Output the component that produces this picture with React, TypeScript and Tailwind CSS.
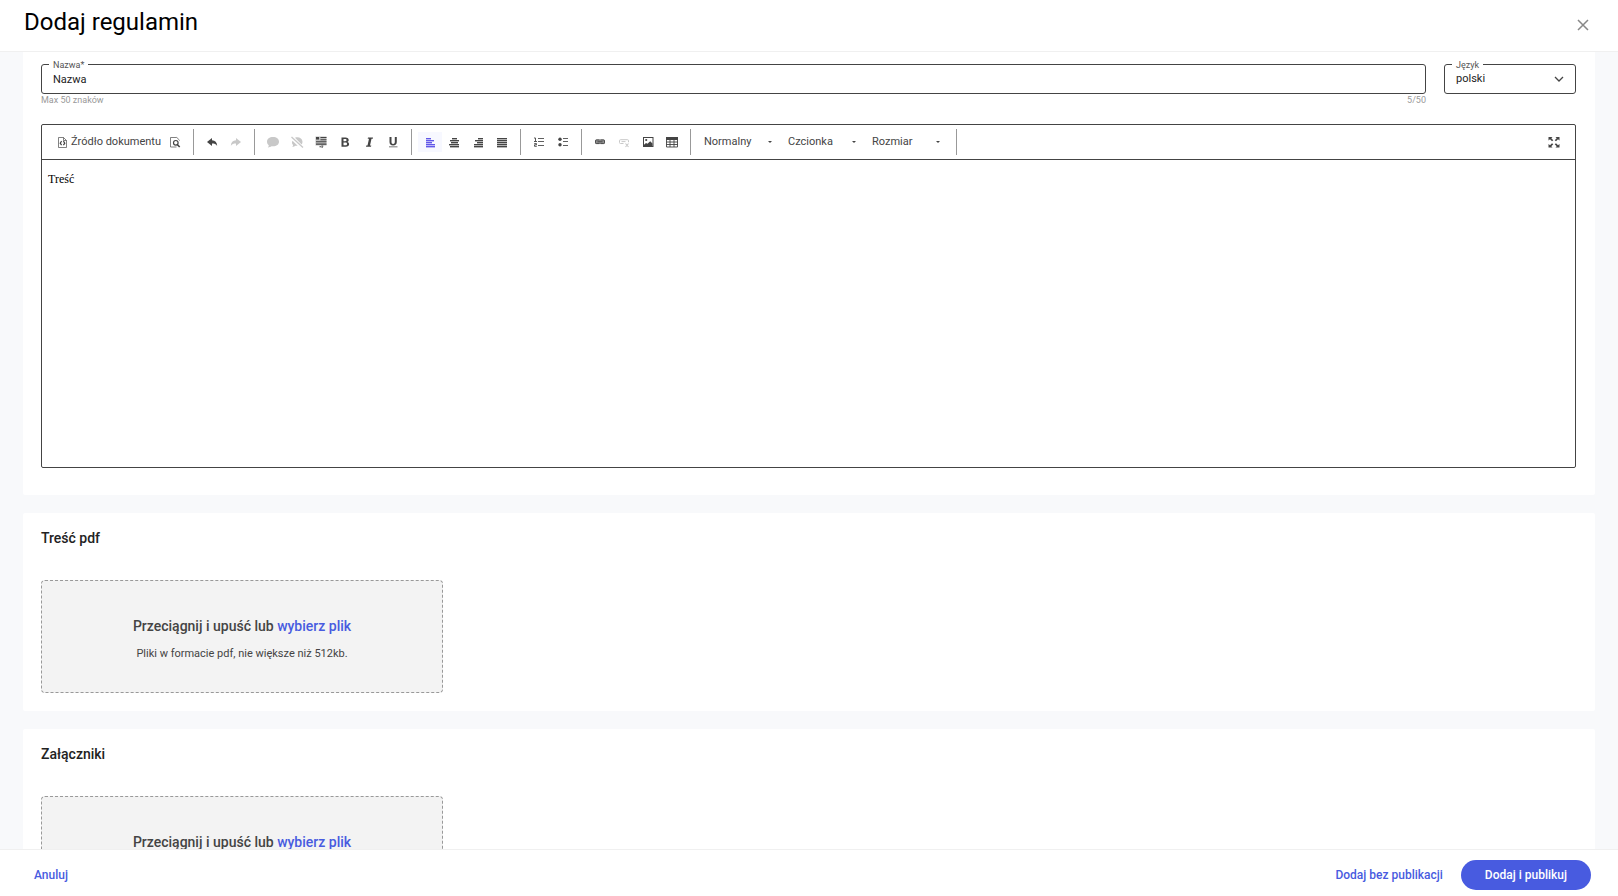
import { useState, type ReactNode } from "react";

function Icon({ children, size = 16 }: { children: ReactNode; size?: number }) {
  return (
    <svg
      width={size}
      height={size}
      viewBox="0 0 16 16"
      fill="currentColor"
      aria-hidden="true"
      className="shrink-0"
    >
      {children}
    </svg>
  );
}

/** Horizontal text lines, each given as [x, width]. */
function Lines({ rows }: { rows: [number, number][] }) {
  return (
    <Icon>
      {rows.map(([x, w], i) => (
        <rect key={i} x={x} y={4 + i * 2} width={w} height="1.4" />
      ))}
    </Icon>
  );
}

const icons = {
  source: (
    <Icon>
      <path
        d="M4.500 3.500h5l3 3v7h-8z M9.500 3.500v3h3"
        fill="none"
        stroke="currentColor"
        strokeWidth="0.9"
        opacity="0.75"
      />
      <path
        d="M7.600 7.200L6.200 9.200l1.400 2M9.400 7.200l1.400 2-1.400 2"
        fill="none"
        stroke="currentColor"
        strokeWidth="1.2"
      />
    </Icon>
  ),
  preview: (
    <Icon>
      <path
        d="M12.500 6.500v-.3l-2.700-2.700H3.500v9.500h6"
        fill="none"
        stroke="currentColor"
        strokeWidth="0.9"
        opacity="0.75"
      />
      <circle cx="8.800" cy="8.800" r="2.300" fill="none" stroke="currentColor" strokeWidth="1.200" />
      <path d="M10.200 10.500l2.500 2.500" stroke="currentColor" strokeWidth="1.600" />
    </Icon>
  ),
  undo: (
    <Icon>
      <path d="M3 8l5-4v2.300c3.200.2 5 2.100 5.200 5.700C12 10.200 10.500 9.600 8 9.600V12z" />
    </Icon>
  ),
  redo: (
    <Icon>
      <path d="M13 8L8 4v2.300C4.800 6.500 3 8.400 2.800 12 4 10.200 5.500 9.600 8 9.600V12z" />
    </Icon>
  ),
  comment: (
    <Icon>
      <path d="M8 3c3.600 0 6 2 6 4.700S11.600 12.300 8 12.300c-.5 0-1 0-1.500-.1-.9.700-2 1.100-3.700 1.300.6-.6.9-1.300 1-2.200C2.600 10.400 2 9.200 2 7.700 2 5 4.400 3 8 3z" />
    </Icon>
  ),
  commentOff: (
    <Icon>
      <path d="M6 3.700c3.500-1.200 7.300.3 7.500 4 0 1-.3 1.900-.9 2.700zM3.500 6.800l5.200 4.900c-.8.100-1.500.1-2.200 0-.8.700-1.800 1.100-3.200 1.300.5-.6.700-1.200.8-2C2.800 9.900 2.600 8.300 3.500 6.800z" />
      <path d="M2.500 3l11.500 10.500" stroke="currentColor" strokeWidth="1.300" />
    </Icon>
  ),
  comments: (
    <Icon>
      <path d="M2.500 2.500h11v9h-3v1.500h-2v-1.500h-6z" opacity="0.35" />
      <path d="M3 3h3v2.500H3zM7.500 3h6v1h-6zM7.500 5.200h6v1h-6zM3 7.300h10.500v1H3zM3 9.500h10.500v1.200H3zM6.500 12.200h1.500v1H6.500zM8.600 11.500h1v2.500h-1z" />
    </Icon>
  ),
  bold: (
    <Icon>
      <path
        fillRule="evenodd"
        d="M4.500 3.500h4c2.100 0 3.200.9 3.200 2.400 0 1-.5 1.700-1.400 2 1.200.3 1.800 1.100 1.800 2.200 0 1.700-1.200 2.700-3.400 2.700H4.500zM6.500 5v2.200h1.700c.9 0 1.400-.4 1.400-1.100S9.100 5 8.200 5zm0 3.600v2.600h2c1 0 1.500-.5 1.500-1.300s-.6-1.300-1.600-1.300z"
      />
    </Icon>
  ),
  italic: (
    <Icon>
      <path d="M7 3.500h5l-.2 1.300h-1.300l-1.500 6.700h1.300l-.3 1.300H5l.2-1.300h1.300l1.500-6.700H6.700z" />
    </Icon>
  ),
  underline: (
    <Icon>
      <path d="M4.500 3h2v5c0 1.300.5 2 1.600 2s1.700-.7 1.700-2V3h2v5c0 2.300-1.300 3.500-3.700 3.500S4.500 10.300 4.500 8z" />
      <rect x="4" y="12.200" width="8.500" height="1.200" opacity="0.6" />
    </Icon>
  ),
  left: <Lines rows={[[4, 5], [4, 8], [4, 6], [4, 9], [4, 9]]} />,
  center: <Lines rows={[[6, 5], [4, 9], [5, 7], [3, 10], [4, 9]]} />,
  right: <Lines rows={[[8, 5], [5, 8], [7, 6], [4, 9], [4, 9]]} />,
  justify: <Lines rows={[[3, 10], [3, 10], [3, 10], [3, 10], [3, 10]]} />,
  numbered: (
    <Icon>
      <path d="M7 4h6v1H7zM7 7h6v1H7zM7 11h6v1H7z" opacity="0.85" />
      <path
        d="M3 4h1.500v3.500M3 7.500h3M3.200 9.600h2.300v1.200H3.500v1.500h2.300"
        fill="none"
        stroke="currentColor"
        strokeWidth="0.9"
      />
    </Icon>
  ),
  bulleted: (
    <Icon>
      <path d="M8 4h5v1H8zM8 7h5v1H8zM8 11h5v1H8z" opacity="0.85" />
      <circle cx="5" cy="5.300" r="1.700" />
      <circle cx="5" cy="10.800" r="1.700" />
    </Icon>
  ),
  link: (
    <Icon>
      <rect x="3" y="5.500" width="10" height="4.500" rx="1.500" opacity="0.6" />
      <path
        d="M7.500 5.900H4.500a1 1 0 0 0-1 1v1.700a1 1 0 0 0 1 1h3M8.500 5.900h3a1 1 0 0 1 1 1v1.700a1 1 0 0 1-1 1h-3M5.500 7.750h5"
        fill="none"
        stroke="currentColor"
        strokeWidth="0.9"
      />
    </Icon>
  ),
  unlink: (
    <Icon>
      <path
        d="M7.500 9.500h-3a1 1 0 0 1-1-1V6.700a1 1 0 0 1 1-1h7a1 1 0 0 1 1 1v1.500M5.500 7.600h4"
        fill="none"
        stroke="currentColor"
        strokeWidth="1"
      />
      <path d="M9.500 9.500l3 3.500M12.500 9.500l-3 3.500" stroke="currentColor" strokeWidth="1.100" />
    </Icon>
  ),
  image: (
    <Icon>
      <path fillRule="evenodd" d="M3 3h10.500v10H3zm1 1v8h8.500V4z" />
      <path d="M4 10.800l2-1.800 1.500.8 2.700-2.600L12.500 9.500V12H4z" />
      <circle cx="6.200" cy="6" r="1.100" />
    </Icon>
  ),
  table: (
    <Icon>
      <path d="M2 3h12v3H2z" />
      <path
        d="M2.500 5v8h11V5M2 8h12M2 10.500h12M6 6v7M10 6v7"
        fill="none"
        stroke="currentColor"
        strokeWidth="0.9"
      />
    </Icon>
  ),
  maximize: (
    <Icon>
      <path d="M2.500 3h4L5.300 4.200l2 2L6 7.300l-2-2L2.500 6.500zM13.500 3h-4l1.200 1.200-2 2L10 7.300l2-2 1.500 1.200zM2.500 13.500h4l-1.200-1.200 2-2L6 9.200l-2 2-1.500-1.200zM13.500 13.500h-4l1.200-1.200-2-2L10 9.200l2 2 1.500-1.200z" />
    </Icon>
  ),
};

function ToolButton({
  label,
  icon,
  disabled = false,
  active = false,
}: {
  label: string;
  icon: ReactNode;
  disabled?: boolean;
  active?: boolean;
}) {
  return (
    <button
      type="button"
      aria-label={label}
      disabled={disabled}
      className={
        "flex h-5 w-6 items-center justify-center " +
        (active ? "bg-[#f7f8ff] text-[#6157e8]" : disabled ? "text-[#c8c8c8]" : "text-[#444]")
      }
    >
      {icon}
    </button>
  );
}

function ToolGroup({ children }: { children: ReactNode }) {
  return <div className="flex h-[26px] items-center border-r border-[#999] px-1.5">{children}</div>;
}

function ToolSelect({ label }: { label: string }) {
  return (
    <div className="flex w-[84px] items-center pr-4">
      <select
        aria-label={label}
        defaultValue={label}
        className="min-w-0 flex-1 appearance-none bg-transparent text-[11px] leading-4 text-[#444] outline-none"
      >
        <option>{label}</option>
      </select>
      <svg width="4" height="2" viewBox="0 0 4 2" aria-hidden="true" className="shrink-0">
        <path d="M0 0h4L2 2z" fill="#444" />
      </svg>
    </div>
  );
}

function Outlined({
  id,
  label,
  className,
  children,
}: {
  id: string;
  label: string;
  className: string;
  children: ReactNode;
}) {
  return (
    <div className={"relative h-[30px] rounded-[3px] border border-[#444] " + className}>
      <label
        htmlFor={id}
        className="absolute -top-1.5 left-[7px] bg-white px-1 text-[9px] leading-3 text-[#555]"
      >
        {label}
      </label>
      {children}
    </div>
  );
}

function DropZone({ id }: { id: string }) {
  return (
    <div className="flex h-[113px] w-[402px] max-w-full flex-col items-center justify-center gap-3 rounded-[4px] border border-dashed border-[#999] bg-[#f3f3f3] pt-[7px]">
      <p className="text-sm leading-4 font-medium text-[#444]">
        Przeciągnij i upuść lub{" "}
        <label htmlFor={id} className="cursor-pointer text-[#485be0]">
          wybierz plik
        </label>
        <input id={id} type="file" accept="application/pdf" className="sr-only" />
      </p>
      <p className="text-[11px] leading-4 text-[#444]">Pliki w formacie pdf, nie większe niż 512kb.</p>
    </div>
  );
}

function FileCard({ id, title }: { id: string; title: string }) {
  return (
    <section className="rounded-[2px] bg-white px-[18px] pt-4 pb-[18px]">
      <h2 className="mb-8 text-sm leading-[19px] font-medium text-[#222]">{title}</h2>
      <DropZone id={id} />
    </section>
  );
}

export default function App() {
  const [name, setName] = useState("Nazwa");

  return (
    <div className="flex h-screen flex-col overflow-hidden bg-[#f8f9fb] font-[Roboto,sans-serif]">
      <header className="flex h-[52px] shrink-0 items-center justify-between border-b border-[#f0f0f0] bg-white pr-7 pl-6">
        <h1 className="pb-2 text-2xl text-black">Dodaj regulamin</h1>
        <button type="button" aria-label="Zamknij" className="pb-0.5 text-[#888]">
          <svg width="14" height="14" viewBox="0 0 14 14" aria-hidden="true">
            <path d="M2 2l10 10M12 2L2 12" stroke="currentColor" strokeWidth="1.500" />
          </svg>
        </button>
      </header>

      <main className="flex min-h-0 flex-1 flex-col gap-[18px] overflow-y-auto px-[23px] [scrollbar-width:none] *:shrink-0">
        <section className="rounded-b-[2px] bg-white pt-3 pr-[19px] pb-[27px] pl-[18px]">
          <div className="flex gap-[18px]">
            <div className="flex-1">
              <Outlined id="name" label="Nazwa*" className="w-full">
                <input
                  id="name"
                  value={name}
                  maxLength={50}
                  onChange={(e) => setName(e.target.value)}
                  className="h-full w-full bg-transparent px-[11px] text-[11px] text-[#222] outline-none"
                />
              </Outlined>
              <div className="flex justify-between text-[9px] leading-3 text-[#999]">
                <span>Max 50 znaków</span>
                <span>{name.length}/50</span>
              </div>
            </div>
            <Outlined id="language" label="Język" className="w-[132px]">
              <div className="flex h-full items-center px-[11px]">
                <select
                  id="language"
                  className="min-w-0 flex-1 appearance-none bg-transparent text-[11px] text-[#222] outline-none"
                >
                  <option>polski</option>
                </select>
                <svg width="10" height="6" viewBox="0 0 10 6" fill="none" aria-hidden="true">
                  <path d="M1 1l4 4 4-4" stroke="#444" strokeWidth="1.300" />
                </svg>
              </div>
            </Outlined>
          </div>

          <div className="mt-[18px] rounded-[2px] border border-[#444]">
            <div className="flex h-[35px] items-center border-b border-[#444] pr-[9px] pl-1.5">
              <ToolGroup>
                <button
                  type="button"
                  className="flex h-5 items-center gap-px pr-0.5 text-[11px] leading-4 whitespace-nowrap text-[#444]"
                >
                  {icons.source}
                  Źródło dokumentu
                </button>
                <ToolButton label="Podgląd" icon={icons.preview} />
              </ToolGroup>
              <ToolGroup>
                <ToolButton label="Cofnij" icon={icons.undo} />
                <ToolButton label="Ponów" icon={icons.redo} disabled />
              </ToolGroup>
              <ToolGroup>
                <ToolButton label="Komentarz" icon={icons.comment} disabled />
                <ToolButton label="Usuń komentarz" icon={icons.commentOff} disabled />
                <ToolButton label="Komentarze" icon={icons.comments} />
                <ToolButton label="Pogrubienie" icon={icons.bold} />
                <ToolButton label="Kursywa" icon={icons.italic} />
                <ToolButton label="Podkreślenie" icon={icons.underline} />
              </ToolGroup>
              <ToolGroup>
                <ToolButton label="Do lewej" icon={icons.left} active />
                <ToolButton label="Do środka" icon={icons.center} />
                <ToolButton label="Do prawej" icon={icons.right} />
                <ToolButton label="Wyjustuj" icon={icons.justify} />
              </ToolGroup>
              <ToolGroup>
                <ToolButton label="Lista numerowana" icon={icons.numbered} />
                <ToolButton label="Lista wypunktowana" icon={icons.bulleted} />
              </ToolGroup>
              <ToolGroup>
                <ToolButton label="Wstaw odnośnik" icon={icons.link} />
                <ToolButton label="Usuń odnośnik" icon={icons.unlink} disabled />
                <ToolButton label="Obrazek" icon={icons.image} />
                <ToolButton label="Tabela" icon={icons.table} />
              </ToolGroup>
              <div className="flex h-[26px] items-center border-r border-[#999] pl-[13px]">
                <ToolSelect label="Normalny" />
                <ToolSelect label="Czcionka" />
                <ToolSelect label="Rozmiar" />
              </div>
              <div className="ml-auto">
                <ToolButton label="Maksymalizuj" icon={icons.maximize} />
              </div>
            </div>
            <textarea
              aria-label="Treść"
              defaultValue="Treść"
              className="block h-[307px] w-full resize-none px-1.5 py-[11px] font-['Liberation_Serif',serif] text-xs text-black outline-none"
            />
          </div>
        </section>

        <FileCard id="pdf-file" title="Treść pdf" />
        <FileCard id="attachment-file" title="Załączniki" />
      </main>

      <footer className="flex h-[47px] shrink-0 items-center justify-between border-t border-[#f0f0f0] bg-white pt-1 pr-[27px] pl-[34px] text-xs font-medium">
        <button type="button" className="text-[#485be0]">
          Anuluj
        </button>
        <div className="flex items-center gap-[18px]">
          <button type="button" className="text-[#485be0]">
            Dodaj bez publikacji
          </button>
          <button type="button" className="h-[30px] rounded-full bg-[#485be0] px-6 text-white">
            Dodaj i publikuj
          </button>
        </div>
      </footer>
    </div>
  );
}
